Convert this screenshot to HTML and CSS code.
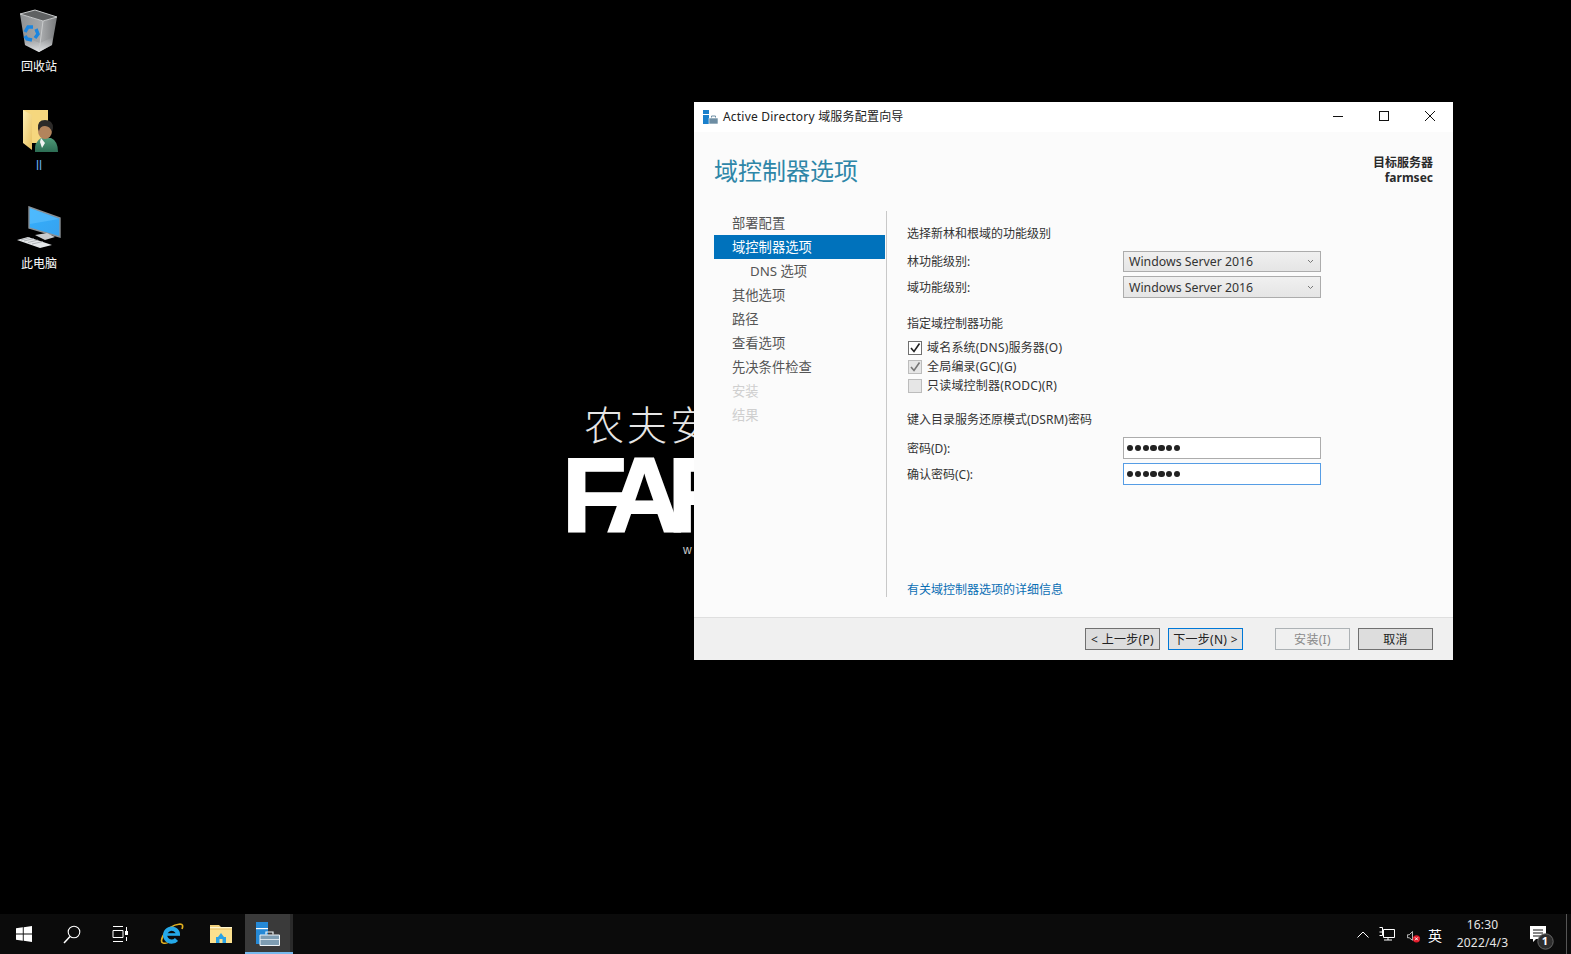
FILE: index.html
```html
<!DOCTYPE html>
<html lang="zh-CN">
<head>
<meta charset="utf-8">
<title>Active Directory 域服务配置向导</title>
<link rel="stylesheet" href="styles.css">
</head>
<body>
<div class="desktop">
  <div class="wallpaper">
    <div class="wp-cn">农夫安</div>
    <div class="wp-en">FAR</div>
    <div class="wp-url">w</div>
  </div>

  <div class="desk-icon di-bin">
    <svg class="di-svg" width="76" height="48" viewBox="0 0 76 48">
      <defs>
        <linearGradient id="binG" x1="0" y1="0" x2="1" y2="0"><stop offset="0" stop-color="#8f9294"/><stop offset=".6" stop-color="#a6a8aa"/><stop offset="1" stop-color="#77797b"/></linearGradient>
        <linearGradient id="binB" x1="0" y1="0" x2="0" y2="1"><stop offset="0" stop-color="#c4c6c8" stop-opacity="0"/><stop offset="1" stop-color="#e4e6e8"/></linearGradient>
      </defs>
      <path d="M19 9 L42 16 L56 12 L51 40 L38 47 L24 40Z" fill="url(#binG)"/>
      <path d="M19 9 L34 5 L56 12 L42 16Z" fill="#5f6162" stroke="#c9cbcc" stroke-width="1"/>
      <path d="M23 32 L39 38 L52 32 L51 40 L38 47 L24 40Z" fill="url(#binB)"/>
      <path d="M42 16 L38 47" stroke="#c9cbcc" stroke-width="1" fill="none"/>
      <g fill="none" stroke="#1b86e0" stroke-width="3.400">
        <path d="M24 27 L27 22 L32 22"/>
        <path d="M35 24 L37 29 L34 33"/>
        <path d="M31 35 L26 34 L24 31"/>
      </g>
    </svg>
    <span class="di-label di-label-low">回收站</span>
  </div>

  <div class="desk-icon di-user">
    <svg class="di-svg" width="76" height="48" viewBox="0 0 76 48">
      <defs>
        <linearGradient id="fldG" x1="0" y1="0" x2="1" y2="1"><stop offset="0" stop-color="#fff0b4"/><stop offset="1" stop-color="#e8c05e"/></linearGradient>
        <linearGradient id="perG" x1="0" y1="0" x2="0" y2="1"><stop offset="0" stop-color="#4f9a78"/><stop offset="1" stop-color="#2d6d54"/></linearGradient>
      </defs>
      <rect x="22" y="5" width="25" height="33" fill="#f6d77e"/>
      <path d="M22 5 L31 10 L31 45 L22 38Z" fill="url(#fldG)"/>
      <path d="M34 47 Q33 37 40 33 L50 33 Q57 36 57 47Z" fill="url(#perG)"/>
      <path d="M40 33 L44 38 L41 43 L39 37Z" fill="#f2f2f2"/>
      <ellipse cx="44" cy="26" rx="7" ry="8" fill="#b3845c"/>
      <path d="M37 24 Q36 15 44 15 Q52 15 52 23 L51 27 Q49 21 44 21 Q39 21 38 26Z" fill="#2c2a28"/>
    </svg>
    <span class="di-label di-label-blue">ll</span>
  </div>

  <div class="desk-icon di-pc">
    <svg class="di-svg" width="76" height="48" viewBox="0 0 76 48">
      <defs>
        <linearGradient id="scrG" x1="0" y1="0" x2="1" y2="1"><stop offset="0" stop-color="#32b0ff"/><stop offset="1" stop-color="#38a2ee"/></linearGradient>
      </defs>
      <path d="M28 4 L59 15 L59 34 L28 25Z" fill="url(#scrG)" stroke="#8a9095" stroke-width="1.400"/>
      <path d="M29 5 L58 16 L29 21Z" fill="#6cc8ff" opacity=".45"/>
      <path d="M34 32 L46 30 L54 34 L44 37Z" fill="#c7cbce"/>
      <path d="M16 37 L27 34 L51 42 L39 45Z" fill="#e4e7e9"/>
      <path d="M20 37 L29 34.500 M23 38 L33 35.500 M27 39.500 L37 37 M31 41 L42 38.500" stroke="#9a9ea2" stroke-width=".7"/>
    </svg>
    <span class="di-label">此电脑</span>
  </div>

  <section class="win">
    <header class="win-title">
      <svg class="ti-icon" width="16" height="16" viewBox="0 0 16 16">
        <rect x="1" y="1" width="6" height="14" fill="#1a80cc"/>
        <rect x="1" y="5" width="6" height="1" fill="#fff"/>
        <path d="M7 9 H16 V15 H7Z" fill="#6d8da3" stroke="#fff" stroke-width=".6"/>
        <path d="M9.500 8.500 V7 H13.500 V8.500" fill="none" stroke="#6d8da3"/>
      </svg>
      <span class="ti-text">Active Directory 域服务配置向导</span>
      <div class="ti-btns">
        <svg class="ti-btn" width="46" height="30" viewBox="0 0 46 30"><path d="M18 14.500 H28" stroke="#111" fill="none"/></svg>
        <svg class="ti-btn" width="46" height="30" viewBox="0 0 46 30"><rect x="18.500" y="9.500" width="9" height="9" stroke="#111" fill="none"/></svg>
        <svg class="ti-btn" width="46" height="30" viewBox="0 0 46 30"><path d="M18 9 L28 19 M28 9 L18 19" stroke="#111" fill="none"/></svg>
      </div>
    </header>

    <div class="win-body">
      <div class="head">
        <h1 class="head-title">域控制器选项</h1>
        <div class="head-target">目标服务器<br>farmsec</div>
      </div>
      <div class="main">
        <nav class="nav">
          <div class="nav-item">部署配置</div>
          <div class="nav-item nav-active">域控制器选项</div>
          <div class="nav-item nav-sub">DNS 选项</div>
          <div class="nav-item">其他选项</div>
          <div class="nav-item">路径</div>
          <div class="nav-item">查看选项</div>
          <div class="nav-item">先决条件检查</div>
          <div class="nav-item nav-off">安装</div>
          <div class="nav-item nav-off">结果</div>
        </nav>
        <div class="content">
          <div class="sec-label sec-first">选择新林和根域的功能级别</div>
          <div class="field-grid field-combos">
            <label class="f-label">林功能级别:</label>
            <div class="combo"><span>Windows Server 2016</span><svg width="7" height="5" viewBox="0 0 7 5"><path d="M1 1 L3.500 3.500 L6 1" fill="none" stroke="#777"/></svg></div>
            <label class="f-label f-low">域功能级别:</label>
            <div class="combo combo-low"><span>Windows Server 2016</span><svg width="7" height="5" viewBox="0 0 7 5"><path d="M1 1 L3.500 3.500 L6 1" fill="none" stroke="#777"/></svg></div>
          </div>
          <div class="sec-label sec-second">指定域控制器功能</div>
          <div class="checks">
            <div class="chk-row">
              <span class="chk"><svg width="12" height="12" viewBox="0 0 12 12"><path d="M2 6 L5 9.500 L10.500 1.500" fill="none" stroke="#222" stroke-width="1.600"/></svg></span>
              <span>域名系统(DNS)服务器(O)</span>
            </div>
            <div class="chk-row">
              <span class="chk chk-off"><svg width="12" height="12" viewBox="0 0 12 12"><path d="M2 6 L5 9.500 L10.500 1.500" fill="none" stroke="#777" stroke-width="1.600"/></svg></span>
              <span>全局编录(GC)(G)</span>
            </div>
            <div class="chk-row">
              <span class="chk chk-off"></span>
              <span>只读域控制器(RODC)(R)</span>
            </div>
          </div>
          <div class="sec-label sec-third">键入目录服务还原模式(DSRM)密码</div>
          <div class="field-grid field-pass">
            <label class="f-label f-low">密码(D):</label>
            <div class="pass"><i></i><i></i><i></i><i></i><i></i><i></i><i></i></div>
            <label class="f-label f-low">确认密码(C):</label>
            <div class="pass pass-focus"><i></i><i></i><i></i><i></i><i></i><i></i><i></i></div>
          </div>
          <a class="more" href="#">有关域控制器选项的详细信息</a>
        </div>
      </div>
    </div>

    <footer class="win-foot">
      <button class="btn">&lt; 上一步(P)</button>
      <button class="btn btn-default">下一步(N) &gt;</button>
      <button class="btn btn-off btn-gap">安装(I)</button>
      <button class="btn">取消</button>
    </footer>
  </section>

  <div class="taskbar">
    <div class="tb-cell">
      <svg width="16" height="16" viewBox="0 0 16 16"><path d="M0 2.300 L6.800 1.300 V7.500 H0Z M7.700 1.200 L16 0 V7.500 H7.700Z M0 8.400 H6.800 V14.700 L0 13.700Z M7.700 8.400 H16 V16 L7.700 14.800Z" fill="#fff"/></svg>
    </div>
    <div class="tb-cell">
      <svg width="18" height="19" viewBox="0 0 18 19"><circle cx="11" cy="7" r="5.800" fill="none" stroke="#fff" stroke-width="1.100"/><path d="M7 11.500 L1 18" stroke="#fff" stroke-width="1.500" fill="none"/></svg>
    </div>
    <div class="tb-cell">
      <svg width="17" height="16" viewBox="0 0 17 16" fill="none" stroke="#fff"><path d="M1 .5 H11 M1 4.500 H11 V11.500 H1Z M1 15.500 H11 M14.500 1 V5 M14.500 11 V15"/><rect x="13" y="5" width="3" height="4" fill="#fff" stroke="none"/></svg>
    </div>
    <div class="tb-cell tb-cell-ie">
      <svg width="24" height="22" viewBox="0 0 24 22">
        <path d="M3 20 Q0 19 3 13 Q9 2 20 1 Q24 1 22 6" fill="none" stroke="#e3b01f" stroke-width="1.700"/>
        <path d="M3 20 Q6 21 9 19" fill="none" stroke="#e3b01f" stroke-width="1.500"/>
        <path d="M18 11 A6.500 6.500 0 1 0 16.500 16.500" fill="none" stroke="#25a9e8" stroke-width="4.200"/>
        <path d="M7 11.500 H20" stroke="#25a9e8" stroke-width="2.600"/>
      </svg>
    </div>
    <div class="tb-cell tb-cell-fld">
      <svg width="22" height="20" viewBox="0 0 22 20">
        <path d="M0 1 H9 L11 3 H22 V19 H0Z" fill="#f0cf7a"/>
        <rect x="0" y="6" width="22" height="13" fill="#fbe08e"/>
        <rect x="0" y="3" width="22" height="1.200" fill="#fff6d0"/>
        <path d="M6 19 V13 H8 L11 9 L14 13 H16 V19Z" fill="#2aa3e6"/>
        <rect x="9.500" y="15" width="3" height="4" fill="#fbe08e"/>
      </svg>
    </div>
    <div class="tb-active">
      <svg width="24" height="24" viewBox="0 0 24 24">
        <rect x="0" y="0" width="12" height="22" fill="#2589d6"/>
        <rect x="0" y="6" width="12" height="1.200" fill="#fff"/>
        <path d="M4 13 H23.500 V23.500 H4Z" fill="#7e9db2" stroke="#eef3f6"/>
        <path d="M4 17.500 H23.500" stroke="#eef3f6" stroke-width=".8"/>
        <path d="M10 12.500 V10 H17 V12.500" fill="none" stroke="#eef3f6" stroke-width="1.200"/>
      </svg>
    </div>
    <div class="tb-strip"></div>
    <div class="tb-spacer"></div>
    <div class="tray-cell">
      <svg width="12" height="7" viewBox="0 0 12 7"><path d="M.5 6.500 L6 1 L11.500 6.500" fill="none" stroke="#fff"/></svg>
    </div>
    <div class="tray-cell">
      <svg width="16" height="14" viewBox="0 0 16 14" fill="none" stroke="#fff"><path d="M4.500 2.500 H15.500 V10.500 H4.500Z M.5 .5 H3.500 V8.500 H.5 M3 5 H.5 M9 11 V13 H5 M9 13 H13"/></svg>
    </div>
    <div class="tray-cell tray-vol">
      <svg width="22" height="18" viewBox="0 0 22 18">
        <path d="M.5 6 H3 L7.500 1.500 V13.500 L3 10 H.5Z" fill="none" stroke="#fff"/>
        <circle cx="13" cy="11.500" r="5" fill="#e41b2a"/>
        <path d="M11 9.500 L15 13.500 M15 9.500 L11 13.500" stroke="#fff" stroke-width="1.300"/>
      </svg>
    </div>
    <div class="tray-cell tray-ime">英</div>
    <div class="clock"><span>16:30</span><span>2022/4/3</span></div>
    <div class="notif">
      <svg width="26" height="24" viewBox="0 0 26 24">
        <path d="M0 0 H16 V13 H6 L3 16 V13 H0Z" fill="#fff"/>
        <path d="M3 4 H13 M3 7 H13 M3 10 H13" stroke="#111"/>
        <circle cx="15.500" cy="15.500" r="7.700" fill="#2e2e2e" stroke="#666"/>
      </svg>
      <span class="notif-num">1</span>
    </div>
    <div class="tb-show"></div>
  </div>
</div>
</body>
</html>
```
FILE: styles.css
```css
* { box-sizing: border-box; }
html, body { margin: 0; padding: 0; height: 100%; background: #000; overflow: hidden; }
body { font: 12px/1.3 "Noto Sans", "Noto Sans CJK SC", sans-serif; color: #333; }
.desktop { position: relative; width: 1571px; height: 954px; background: #000; overflow: hidden; }

.wallpaper { position: absolute; left: 560px; top: 398px; width: 134px; height: 170px; overflow: hidden; color: #fff; white-space: nowrap; }
.wp-cn { font: 200 40px/50px "Noto Sans CJK SC", sans-serif; letter-spacing: 3px; margin-left: 24px; color: #e6e6e6; }
.wp-en { font: 900 106px/90px "Liberation Sans", sans-serif; letter-spacing: -15px; -webkit-text-stroke: 2px #fff; margin: 2px 0 0 2px; }
.wp-url { font: 400 12px/14px "Liberation Sans", sans-serif; margin-left: 123px; margin-top: 3px; color: #ccc; }

.desk-icon { position: absolute; left: 1px; width: 76px; display: flex; flex-direction: column; align-items: center; color: #fff; }
.di-bin { top: 5px; }
.di-user { top: 105px; }
.di-pc { top: 203px; }
.di-svg { display: block; }
.di-label { font-size: 12px; line-height: 16px; margin-top: 5px; }
.di-label-low { margin-top: 6px; }
.di-label-blue { color: #6db4f5; }

.win { position: absolute; left: 694px; top: 102px; width: 759px; height: 558px; display: flex; flex-direction: column; background: #fbfbfb; color: #333; }
.win-title { height: 30px; flex: none; display: flex; align-items: center; background: #fff; padding-left: 8px; }
.ti-icon { flex: none; }
.ti-text { margin-left: 5px; font-size: 12px; line-height: 16px; color: #222; letter-spacing: .2px; }
.ti-btns { margin-left: auto; display: flex; }
.ti-btn { display: block; }

.win-body { flex: 1; display: flex; flex-direction: column; padding-bottom: 20px; min-height: 0; }
.head { height: 79px; flex: none; display: flex; justify-content: space-between; padding: 0 20px 0 20px; }
.head-title { margin: 20px 0 0; font: 400 24px/36px "Noto Sans CJK SC", sans-serif; color: #2e86a8; }
.head-target { margin-top: 23px; text-align: right; font-weight: 700; font-size: 12px; line-height: 15px; color: #2a2a2a; }

.main { flex: 1; display: flex; min-height: 0; }
.nav { width: 173px; margin-left: 20px; flex: none; border-right: 1px solid #c8c8c8; padding-right: 1px; }
.nav-item { height: 24px; line-height: 25px; padding-left: 18px; font-size: 13.3px; color: #555; }
.nav-active { background: #0072bc; color: #fff; }
.nav-sub { padding-left: 36px; }
.nav-off { color: #cfcfcf; }

.content { flex: 1; display: flex; flex-direction: column; padding-left: 20px; padding-right: 132px; }
.sec-label { height: 18px; line-height: 18px; font-size: 12px; color: #333; }
.sec-first { margin-top: 14px; }
.sec-second { margin-top: 17px; }
.sec-third { margin-top: 16px; }

.field-grid { display: grid; grid-template-columns: 216px 198px; align-items: center; }
.field-combos { margin-top: 8px; row-gap: 4px; grid-template-rows: 21px 22px; }
.field-pass { margin-top: 8px; row-gap: 4px; grid-auto-rows: 22px; }
.f-label { font-size: 12px; line-height: 16px; color: #333; }
.f-low { padding-top: 2px; }

.combo { height: 100%; border: 1px solid #acacac; background: linear-gradient(#f0f0f0, #e5e5e5); display: flex; align-items: center; justify-content: space-between; padding: 0 6px 0 5px; font-size: 12.3px; color: #333; }
.combo-low { padding-top: 1px; }
.pass { height: 22px; border: 1px solid #acacac; background: #fff; display: flex; align-items: center; gap: 1.4px; padding-left: 3px; }
.pass i { display: block; width: 6.4px; height: 6.4px; border-radius: 50%; background: #222; }
.pass-focus { border-color: #569de5; }

.checks { margin-top: 5px; display: flex; flex-direction: column; }
.chk-row { height: 19px; display: flex; align-items: center; gap: 5px; font-size: 12px; color: #333; padding-left: 1px; letter-spacing: .2px; }
.chk { width: 14px; height: 14px; border: 1px solid #707070; background: #fff; flex: none; display: flex; align-items: center; justify-content: center; }
.chk-off { border-color: #bcbcbc; background: #e6e6e6; }

.more { margin-top: auto; margin-bottom: -2px; line-height: 18px; font-size: 12px; color: #0a6eb4; text-decoration: none; }

.win-foot { height: 43px; flex: none; background: #f0f0f0; border-top: 1px solid #dfdfdf; display: flex; align-items: flex-start; gap: 8px; padding: 10px 20px 0 0; justify-content: flex-end; }
.btn { width: 75px; height: 22px; padding: 1px 0 0; border: 1px solid #707070; background: #dddddd; font: 12px/20px "Noto Sans", "Noto Sans CJK SC", sans-serif; letter-spacing: .3px; color: #222; }
.btn-default { border-color: #0078d7; background: #e1e1e1; }
.btn-off { border-color: #adb2b5; background: #f0f0f0; color: #8a8a8a; }
.btn-gap { margin-left: 24px; }

.taskbar { position: absolute; left: 0; right: 0; bottom: 0; height: 40px; background: #0b0b0b; display: flex; align-items: stretch; color: #e6e6e6; }
.tb-cell { width: 48px; display: flex; align-items: center; justify-content: center; }
.tb-cell-ie { width: 49px; margin-left: 3px; }
.tb-cell-fld { width: 49px; }
.tb-active { width: 45px; background: #3a3a3a; border-bottom: 2px solid #76b9ed; display: flex; align-items: center; justify-content: center; padding-top: 2px; }
.tb-strip { width: 3px; background: #2a2a2a; border-bottom: 2px solid #76b9ed; }
.tb-spacer { flex: 1; }
.tray-cell { width: 24px; display: flex; align-items: center; justify-content: center; }
.tray-vol svg { margin-left: 8px; margin-top: 6px; }
.tray-ime { font: 14px/1 "Noto Sans CJK SC", sans-serif; color: #fff; padding-top: 1px; }
.clock { width: 71px; display: flex; flex-direction: column; align-items: center; justify-content: center; font-size: 12px; line-height: 18px; color: #e6e6e6; letter-spacing: .15px; }
.notif { position: relative; width: 48px; display: flex; align-items: center; justify-content: center; padding: 8px 0 0 2px; }
.notif-num { position: absolute; left: 20px; top: 20px; width: 14px; text-align: center; font-size: 11px; line-height: 14px; font-weight: 700; color: #fff; }
.tb-show { width: 5px; border-left: 1px solid #555; }
```
